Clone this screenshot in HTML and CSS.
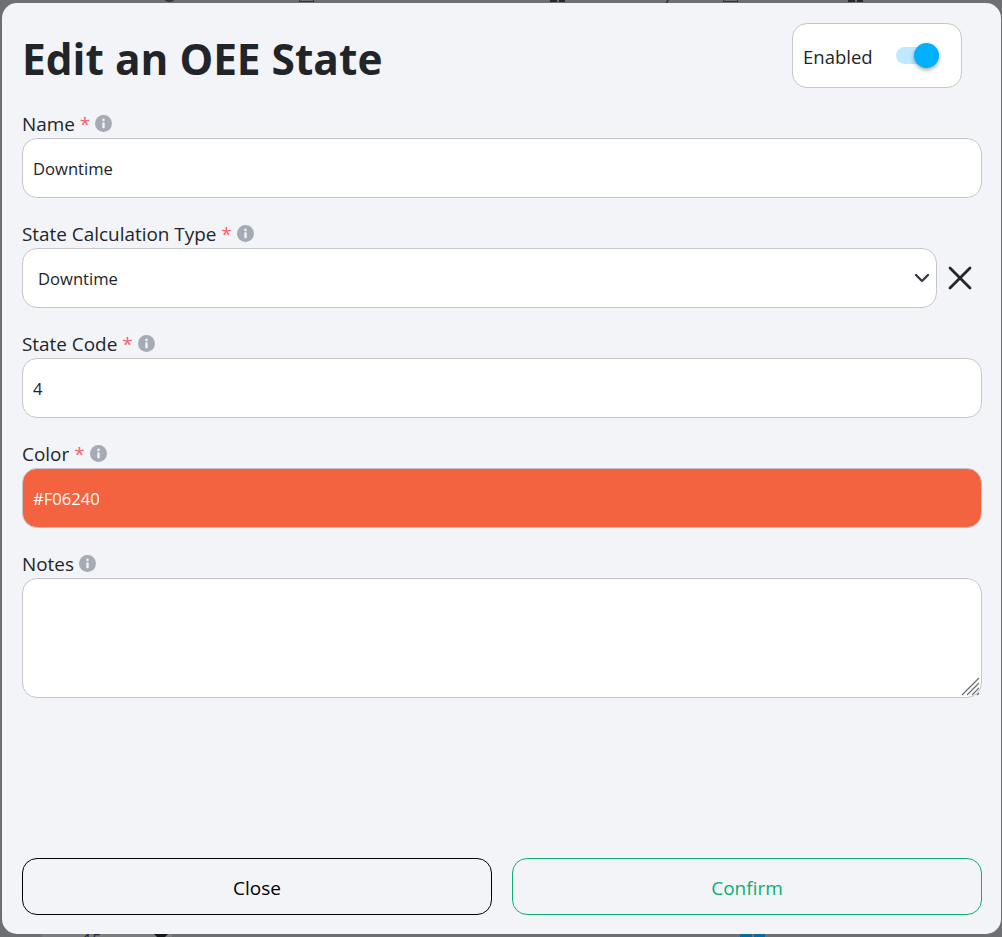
FILE: index.html
```html
<!DOCTYPE html>
<html lang="en">
<head>
    <meta charset="UTF-8">
    <meta name="viewport" content="width=device-width, initial-scale=1.0">
    <title>Edit an OEE State</title>
    <link rel="stylesheet" href="styles.css">
</head>
<body>
    <!-- page behind the modal, only its edges show -->
    <div class="backdrop-nav">
        <span class="nav-item nav-cok"><i class="nav-icon icon-round"></i>Cok</span>
        <span class="nav-item nav-order"><i class="nav-icon icon-outline"></i>Order Execution</span>
        <span class="nav-item nav-inventory"><i class="nav-icon icon-blocks"></i>Inventory</span>
        <span class="nav-item nav-oee"><i class="nav-icon icon-outline"></i>OEE</span>
        <span class="nav-item nav-admin"><i class="nav-icon icon-blocks"></i>Admin</span>
    </div>
    <div class="backdrop-footer">
        <span class="footer-select"></span>
        <span class="footer-rows">15 rows</span>
        <span class="footer-arrow"></span>
        <span class="footer-page"></span>
    </div>

    <div class="modal">
        <div class="modal-header">
            <h1>Edit an OEE State</h1>
            <div class="enabled-box">
                <span>Enabled</span>
                <div class="switch"><div class="switch-knob"></div></div>
            </div>
        </div>

        <div class="field">
            <label for="name">Name <em>*</em>
                <svg class="info" viewBox="0 0 16 16"><circle cx="8" cy="8" r="8"/><circle class="dot" cx="8" cy="4.6" r="1.2"/><rect class="dot" x="6.9" y="6.8" width="2.2" height="5.6" rx="0.6"/></svg>
            </label>
            <input type="text" id="name" value="Downtime">
        </div>

        <div class="field">
            <label for="calcType">State Calculation Type <em>*</em>
                <svg class="info" viewBox="0 0 16 16"><circle cx="8" cy="8" r="8"/><circle class="dot" cx="8" cy="4.6" r="1.2"/><rect class="dot" x="6.9" y="6.8" width="2.2" height="5.6" rx="0.6"/></svg>
            </label>
            <div class="select-row">
                <div class="select-wrap">
                    <select id="calcType">
                        <option>Downtime</option>
                    </select>
                    <svg class="chevron" viewBox="0 0 16 10"><path d="M2 2l6 6 6-6"/></svg>
                </div>
                <svg class="clear" viewBox="0 0 24 24"><path d="M2 2l20 20M22 2L2 22"/></svg>
            </div>
        </div>

        <div class="field">
            <label for="code">State Code <em>*</em>
                <svg class="info" viewBox="0 0 16 16"><circle cx="8" cy="8" r="8"/><circle class="dot" cx="8" cy="4.6" r="1.2"/><rect class="dot" x="6.9" y="6.8" width="2.2" height="5.6" rx="0.6"/></svg>
            </label>
            <input type="text" id="code" value="4">
        </div>

        <div class="field">
            <label for="color">Color <em>*</em>
                <svg class="info" viewBox="0 0 16 16"><circle cx="8" cy="8" r="8"/><circle class="dot" cx="8" cy="4.6" r="1.2"/><rect class="dot" x="6.9" y="6.8" width="2.2" height="5.6" rx="0.6"/></svg>
            </label>
            <input type="text" id="color" class="color-input" value="#F06240">
        </div>

        <div class="field">
            <label for="notes">Notes
                <svg class="info" viewBox="0 0 16 16"><circle cx="8" cy="8" r="8"/><circle class="dot" cx="8" cy="4.6" r="1.2"/><rect class="dot" x="6.9" y="6.8" width="2.2" height="5.6" rx="0.6"/></svg>
            </label>
            <div class="notes-wrap">
                <textarea id="notes"></textarea>
                <svg class="grip" viewBox="0 0 20 20"><path d="M1 18L18 1M6 18L18 6M11 18l7-7M16 18l2-2"/></svg>
            </div>
        </div>

        <div class="modal-footer">
            <button class="btn btn-close">Close</button>
            <button class="btn btn-confirm">Confirm</button>
        </div>
    </div>
</body>
</html>
```

FILE: styles.css
```css
* {
    box-sizing: border-box;
}

body {
    margin: 0;
    height: 937px;
    overflow: hidden;
    position: relative;
    background-color: #6e6f73;
    font-family: "Open Sans", "Noto Sans", Arial, sans-serif;
    color: #212529;
}

.backdrop-nav {
    position: absolute;
    top: 0;
    left: 0;
    width: 1002px;
    height: 3px;
    overflow: hidden;
    color: #33353a;
    font-size: 21px;
    line-height: 20px;
}

.nav-item {
    position: absolute;
    top: -18px;
    display: flex;
    gap: 15px;
}

.nav-icon {
    display: block;
    width: 15px;
    height: 20px;
}

.icon-round {
    background-color: #33353a;
    border-radius: 0 0 8px 8px;
}

.icon-outline {
    border: 1px solid #33353a;
}

.icon-blocks {
    background: linear-gradient(to right, #26282c 0 7px, transparent 7px 9px, #26282c 9px);
}

.nav-cok { left: 162px; }
.nav-order { left: 299px; }
.nav-inventory { left: 550px; }
.nav-oee { left: 723px; }
.nav-admin { left: 848px; }

.backdrop-footer {
    position: absolute;
    left: 42px;
    top: 934px;
    width: 730px;
    height: 3px;
    overflow: hidden;
}

.footer-select {
    position: absolute;
    left: 0;
    top: 0;
    width: 130px;
    height: 3px;
    background-color: #7b7c7f;
}

.footer-rows {
    position: absolute;
    left: 41px;
    top: -4px;
    font-size: 16px;
    line-height: 20px;
    color: #1d2a3a;
}

.footer-arrow {
    position: absolute;
    left: 112px;
    top: 0;
    border: 7px solid transparent;
    border-top-color: #15171a;
    border-bottom: 0;
}

.footer-page {
    position: absolute;
    left: 698px;
    top: 0;
    width: 25px;
    height: 3px;
    background: linear-gradient(to right, #0a6a96 0 12px, #6e6f73 12px 14px, #0a6a96 14px);
}

.modal {
    position: absolute;
    top: 3px;
    left: 2px;
    width: 999px;
    height: 931px;
    padding: 20px 19px 19px 20px;
    display: flex;
    flex-direction: column;
    background-color: #f2f4f8;
    border-radius: 15px;
}

.modal-header {
    display: flex;
    justify-content: space-between;
    height: 87px;
}

.modal-header h1 {
    margin: 11px 0 0;
    font-size: 42.4px;
    line-height: 50px;
    font-weight: 700;
}

.enabled-box {
    width: 170px;
    height: 65px;
    margin-right: 20px;
    padding: 1px 22px 0 10px;
    display: flex;
    align-items: center;
    justify-content: space-between;
    background-color: #fff;
    border: 1px solid #c4c6cc;
    border-radius: 15px;
    font-size: 18.5px;
}

.switch {
    position: relative;
    top: -1px;
    width: 43px;
    height: 17px;
    background-color: #bfe9ff;
    border-radius: 9px;
}

.switch-knob {
    position: absolute;
    top: -4px;
    right: 0;
    width: 25px;
    height: 25px;
    background-color: #00b0ff;
    border-radius: 50%;
    box-shadow: 0 2px 4px rgba(0, 0, 0, 0.35);
}

.field {
    margin-bottom: 22px;
}

.field label {
    display: flex;
    align-items: center;
    gap: 5px;
    height: 28px;
    font-size: 18.9px;
}

.field em {
    color: #ff5c6c;
    font-style: normal;
}

.info {
    width: 17px;
    height: 17px;
    margin: -2px 0 0;
    fill: #a5abb5;
}

.info .dot {
    fill: #f2f4f8;
}

.field input,
.field select,
.field textarea {
    display: block;
    width: 100%;
    height: 60px;
    padding: 0 10px;
    font-family: inherit;
    font-size: 16.6px;
    color: #212529;
    background-color: #fff;
    border: 1px solid #c4c6cc;
    border-radius: 15px;
    outline: none;
}

.notes-wrap {
    position: relative;
}

.field textarea {
    height: 120px;
    padding: 8px 10px;
    resize: none;
}

.grip {
    position: absolute;
    right: 1px;
    bottom: 1px;
    width: 20px;
    height: 20px;
    fill: none;
    stroke: #6b6d70;
    stroke-width: 1.2;
    pointer-events: none;
}

.field .color-input {
    color: #fff;
    background-color: #f46340;
}

.select-row {
    display: flex;
    align-items: center;
    gap: 11px;
    padding-right: 10px;
}

.select-wrap {
    position: relative;
    flex: 1;
}

.field select {
    padding-left: 15px;
    appearance: none;
}

.chevron {
    position: absolute;
    top: 25px;
    right: 7px;
    width: 16px;
    height: 10px;
    fill: none;
    stroke: #343a40;
    stroke-width: 2.4;
    stroke-linecap: round;
    stroke-linejoin: round;
}

.clear {
    width: 24px;
    height: 24px;
    flex: none;
    fill: none;
    stroke: #212529;
    stroke-width: 2.8;
    stroke-linecap: round;
}

.modal-footer {
    display: flex;
    gap: 20px;
    margin-top: auto;
}

.btn {
    flex: 1;
    height: 57px;
    padding-top: 3px;
    font-family: inherit;
    font-size: 19px;
    background-color: transparent;
    border-radius: 15px;
    cursor: pointer;
}

.btn-close {
    color: #000;
    border: 1px solid #000;
}

.btn-confirm {
    color: #0cae74;
    border: 1px solid #0cae74;
}
```
